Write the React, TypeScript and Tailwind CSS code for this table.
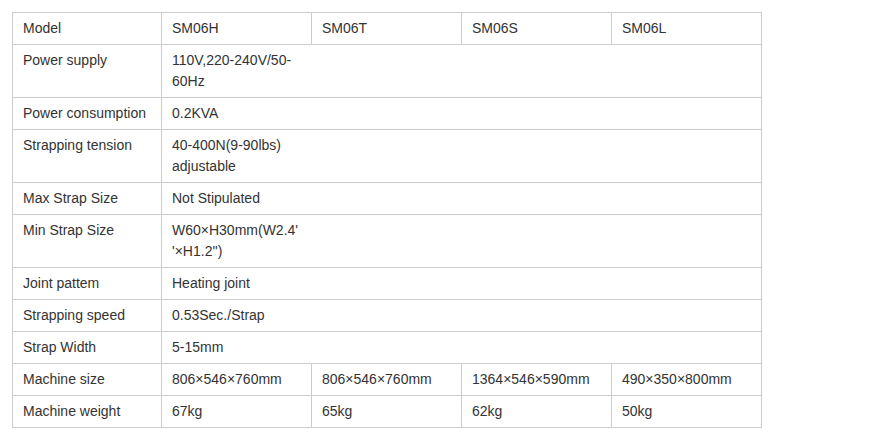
import React from "react";

type Row = { label: string; values: string[] };

const rows: Row[] = [
  { label: "Model", values: ["SM06H", "SM06T", "SM06S", "SM06L"] },
  { label: "Power supply", values: ["110V,220-240V/50-60Hz"] },
  { label: "Power consumption", values: ["0.2KVA"] },
  { label: "Strapping tension", values: ["40-400N(9-90lbs) adjustable"] },
  { label: "Max Strap Size", values: ["Not Stipulated"] },
  { label: "Min Strap Size", values: ["W60×H30mm(W2.4' '×H1.2'')"] },
  { label: "Joint pattem", values: ["Heating joint"] },
  { label: "Strapping speed", values: ["0.53Sec./Strap"] },
  { label: "Strap Width", values: ["5-15mm"] },
  { label: "Machine size", values: ["806×546×760mm", "806×546×760mm", "1364×546×590mm", "490×350×800mm"] },
  { label: "Machine weight", values: ["67kg", "65kg", "62kg", "50kg"] },
];

const cell = "border border-[#cccccc] px-[10px] py-[5px] align-top text-left font-normal";

export default function App() {
  return (
    <div className="bg-white w-[888px] h-[439px] pt-[12px] pl-[12px] text-[14px] leading-[21px] text-[#333333]" style={{ fontFamily: "Arial, 'Liberation Sans', sans-serif" }}>
      <table className="border-collapse table-fixed w-[749px]">
        <colgroup>
          <col className="w-[149px]" />
          <col className="w-[150px]" />
          <col className="w-[150px]" />
          <col className="w-[150px]" />
          <col className="w-[150px]" />
        </colgroup>
        <tbody>
          {rows.map((r) => (
            <tr key={r.label}>
              <td className={cell}>{r.label}</td>
              {r.values.length === 1 ? (
                <td className={cell} colSpan={4}>
                  <div className="w-[129px]">{r.values[0]}</div>
                </td>
              ) : (
                r.values.map((v, i) => (
                  <td key={i} className={cell}>
                    {v}
                  </td>
                ))
              )}
            </tr>
          ))}
        </tbody>
      </table>
    </div>
  );
}
